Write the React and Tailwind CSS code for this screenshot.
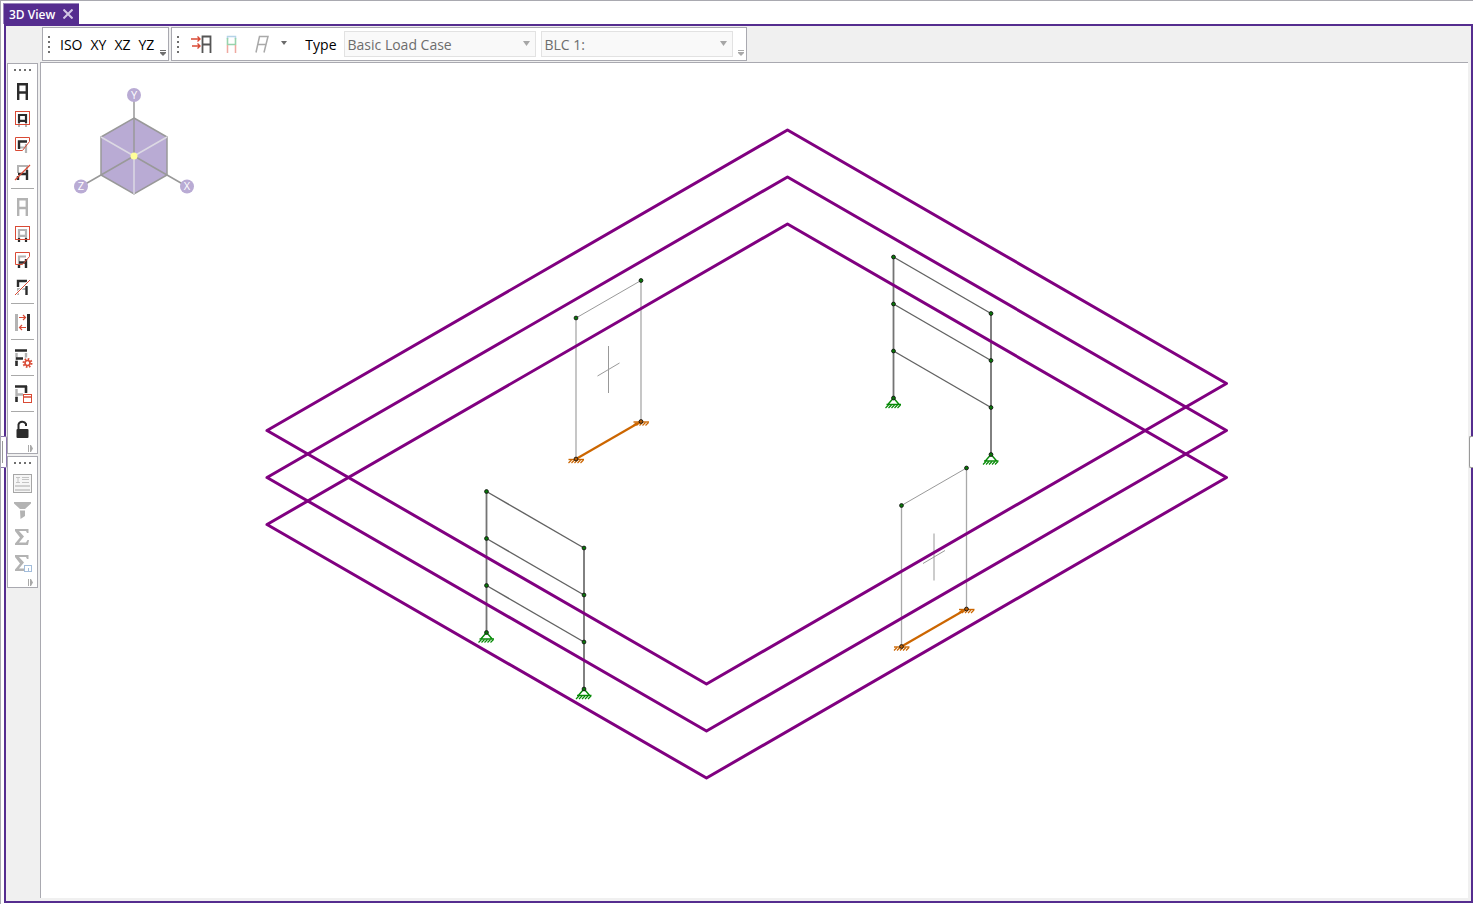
import React from "react";

const DARK = "#2b2b2b";
const PALE = "#b3b3b3";
const RED = "#d94a35";

function Grip({ vertical }) {
  return (
    <span
      className={
        vertical
          ? "flex h-[17px] w-0.5 flex-col justify-between"
          : "flex h-0.5 w-[17px] justify-between"
      }
    >
      <i className="size-0.5 bg-[#6f6f6f]" />
      <i className="size-0.5 bg-[#6f6f6f]" />
      <i className="size-0.5 bg-[#6f6f6f]" />
      <i className="size-0.5 bg-[#6f6f6f]" />
    </span>
  );
}

function Overflow({ color = "#6f6f6f" }) {
  return (
    <svg width="6" height="6" viewBox="0 0 6 6" fill={color} className="shrink-0">
      <rect width="6" height="1" />
      <path d="M0 2H6V3L3 6L0 3Z" />
    </svg>
  );
}

function SideOverflow() {
  return (
    <svg width="5" height="7" viewBox="0 0 5 7" fill="#a9a9a9">
      <rect width="1" height="7" />
      <path d="M2 0H3L5 3.5L3 7H2Z" />
    </svg>
  );
}

function ToolButton({ label, children }) {
  return (
    <button type="button" aria-label={label} title={label} className="block h-[27px] w-full">
      <svg viewBox="0 0 29 27" width="29" height="27" fill="none">
        {children}
      </svg>
    </button>
  );
}

function GroupLine() {
  return (
    <div className="mb-0.5 flex h-[5px] items-center px-[3px]">
      <div className="h-px w-full bg-[#a9a9a9]" />
    </div>
  );
}

function ItemLine() {
  return (
    <div className="flex h-[9px] items-center px-[3px]">
      <div className="h-px w-full bg-[#a9a9a9]" />
    </div>
  );
}

function SideTools() {
  return (
    <div className="flex w-[31px] flex-col border border-[#a9a9b0] bg-white">
      <div className="flex h-3.5 items-center justify-center pb-0.5">
        <Grip />
      </div>
      <ToolButton label="Select all">
        <path d="M10.2 22V6.2H18.8V22M10 14.5H19" stroke={DARK} strokeWidth="2.4" />
      </ToolButton>
      <ToolButton label="Box select">
        <path d="M11 17V22M18 17V22" stroke={PALE} strokeWidth="2" />
        <path d="M11 18V10H18V18M11 15.8H18" stroke={DARK} strokeWidth="2.2" />
        <rect x="7.5" y="6.5" width="14" height="13" stroke={RED} />
      </ToolButton>
      <ToolButton label="Polygon select">
        <path d="M18 12V21M12 15.5H18" stroke={PALE} strokeWidth="2.2" />
        <path d="M11 17V9.5H19" stroke={DARK} strokeWidth="2.4" />
        <path d="M7.5 5.5H21.5V9.5L14.5 18.5H7.5Z" stroke={RED} />
      </ToolButton>
      <ToolButton label="Line select">
        <path d="M10 14V7H19V12" stroke={PALE} strokeWidth="2" />
        <path d="M10 21V17M10 15H19M19 21V11" stroke={DARK} strokeWidth="2.4" />
        <path d="M7 21L22 6" stroke={RED} strokeWidth="1.2" />
      </ToolButton>
      <GroupLine />
      <ToolButton label="Unselect all">
        <path d="M10.2 23V6.2H18.8V23M10 15H19" stroke={PALE} strokeWidth="2.4" />
      </ToolButton>
      <ToolButton label="Box unselect">
        <path d="M11 18V22M18 18V22" stroke={DARK} strokeWidth="2.2" />
        <path d="M11 18V10H18V18M11 15.8H18" stroke={PALE} strokeWidth="2.2" />
        <rect x="7.5" y="6.5" width="14" height="13" stroke={RED} />
      </ToolButton>
      <ToolButton label="Polygon unselect">
        <path d="M11 17V9.5H18" stroke={PALE} strokeWidth="2.2" />
        <path d="M11 21V17M11 15.5H18M18 21V12" stroke={DARK} strokeWidth="2.4" />
        <path d="M7.5 5.5H21.5V9.5L14.5 17.5H7.5Z" stroke={RED} />
      </ToolButton>
      <ToolButton label="Line unselect">
        <path d="M10 21V15H18" stroke={PALE} strokeWidth="2" />
        <path d="M10 13V7H19M18.5 12V21" stroke={DARK} strokeWidth="2.4" />
        <path d="M7 21L22 6" stroke="#fff" strokeWidth="2.2" />
        <path d="M7 21L22 6" stroke={RED} strokeWidth="1" />
      </ToolButton>
      <GroupLine />
      <ToolButton label="Invert selection">
        <path d="M8.5 6V23" stroke={PALE} strokeWidth="3" />
        <path d="M20.5 6V23" stroke={DARK} strokeWidth="3" />
        <path
          d="M11 9.5H17M15 7L17.500 9.500L15 12M18 19.500H12M14 17L11.500 19.500L14 22"
          stroke={RED}
          strokeWidth="1.2"
        />
      </ToolButton>
      <ItemLine />
      <ToolButton label="Selection settings">
        <path d="M8.5 9V18M18 9V15" stroke={PALE} strokeWidth="2.4" />
        <path d="M7 6.5H19M8.500 17V22M8 14.500H15" stroke={DARK} strokeWidth="2.6" />
        <circle cx="19.500" cy="19" r="4.200" stroke="#fff" strokeWidth="3" />
        <circle cx="19.500" cy="19" r="4" stroke={RED} strokeWidth="2" strokeDasharray="1.6 1.5" />
        <circle cx="19.500" cy="19" r="2.500" stroke={RED} strokeWidth="1.6" />
      </ToolButton>
      <ItemLine />
      <ToolButton label="Saved selections">
        <path d="M8.5 9V18M8 14.500H15" stroke={PALE} strokeWidth="2.4" />
        <path d="M7 6.500H19M18 6V13M8.500 17V22" stroke={DARK} strokeWidth="2.6" />
        <rect x="15.500" y="14.500" width="8" height="8" fill="#fff" stroke={RED} />
        <path d="M15 17H24" stroke={RED} strokeWidth="1.5" />
      </ToolButton>
      <ItemLine />
      <ToolButton label="Unlock">
        <rect x="8.5" y="13" width="12" height="9" rx="1" fill={DARK} />
        <path d="M10.5 13V8.5A4 3.8 0 0 1 18 8V10" stroke={DARK} strokeWidth="2" />
      </ToolButton>
      <div className="flex h-2.5 items-center justify-end pr-1">
        <SideOverflow />
      </div>
    </div>
  );
}

function ResultTools() {
  return (
    <div className="flex w-[31px] flex-col border border-[#a9a9b0] bg-white">
      <div className="flex h-3.5 items-center justify-center pb-0.5">
        <Grip />
      </div>
      <ToolButton label="Member details">
        <rect x="5.5" y="3.5" width="18" height="18" fill="#f6f6f6" stroke="#a6a6a6" />
        <path d="M8 6.5H12M10 6V12M8 11.5H12M14 6.5H21M14 8.5H21M14 11.5H21" stroke="#c4c4c4" />
        <path d="M7 15H22M7 19H22" stroke="#c4c4c4" strokeWidth="1.5" />
      </ToolButton>
      <ToolButton label="Filter">
        <path d="M6 4H23V5.5L17 11H12L6 5.5ZM12 12.5H17V18L12.5 21Z" fill={PALE} />
      </ToolButton>
      <ToolButton label="Sum">
        <path d="M7 4H20.5V8H19L18 6H11L16 11.5L11 17.5H18L19.5 15H21L20 20H7V18.5L12 12.5L7 6Z" fill={PALE} />
      </ToolButton>
      <ToolButton label="Sum of selected">
        <path d="M7 3H20.5V7H19L18 5H11L16 10.5L11 16.5H18L19.5 14H21L20 19H7V17.5L12 11.5L7 5Z" fill={PALE} />
        <rect x="16.5" y="13.5" width="7" height="6" fill="#fff" stroke="#a3bddb" />
        <path d="M20.5 16V19" stroke="#a3bddb" />
      </ToolButton>
      <div className="flex h-2 items-start justify-end pr-1">
        <SideOverflow />
      </div>
    </div>
  );
}

function Combo({ label, value }) {
  return (
    <div className="relative w-48">
      <select
        disabled
        aria-label={label}
        defaultValue={value}
        className="block h-[26px] w-full appearance-none border border-[#e2e2e2] bg-[#f9f9f9] pt-px pl-[3px] text-sm leading-5 text-[#6d6d6d] opacity-100"
      >
        <option>{value}</option>
      </select>
      <svg width="7" height="5" viewBox="0 0 7 5" className="absolute top-2.5 right-1.5">
        <path d="M0 0H7L3.5 5Z" fill="#a6a6a6" />
      </svg>
    </div>
  );
}

function TopTools() {
  return (
    <div className="flex items-start gap-0.5 pt-px pl-0.5">
      <div className="flex h-[34px] items-center border border-[#a9a9b0] bg-white pl-[5px] text-sm leading-5 text-black">
        <Grip vertical />
        <div className="ml-2.5 flex gap-2 pt-0.5">
          <button type="button">ISO</button>
          <button type="button">XY</button>
          <button type="button">XZ</button>
          <button type="button">YZ</button>
        </div>
        <div className="ml-1.5 self-end pr-0.5 pb-1">
          <Overflow />
        </div>
      </div>
      <div className="flex h-[34px] items-center border border-[#a9a9b0] bg-white pl-[5px] text-sm leading-5 text-black">
        <Grip vertical />
        <button type="button" aria-label="Render loads" className="ml-3">
          <svg width="21" height="18" viewBox="0 0 21 18" fill="none">
            <path d="M11.5 18V1.5H19.5V18M11.5 9.5H19.5" stroke="#555" strokeWidth="1.8" />
            <path d="M0 4H9M6.5 1.500L9 4L6.5 6.500M1 11H9M6.5 8.500L9 11L6.5 13.500" stroke={RED} strokeWidth="1.4" />
          </svg>
        </button>
        <button type="button" aria-label="Color model" className="ml-3.5">
          <svg width="11" height="18" viewBox="0 0 11 18" fill="none">
            <path d="M1.5 4V1.5H9.5V4" stroke="#b5d3e8" strokeWidth="1.5" />
            <path d="M1.5 3V9.5H9.5V3" stroke="#98d3ac" strokeWidth="1.6" />
            <path d="M1.5 10V18M9.5 10V18" stroke="#efa9a0" strokeWidth="1.5" />
          </svg>
        </button>
        <button type="button" aria-label="Deflected shape" className="ml-[18px]">
          <svg width="14" height="18" viewBox="0 0 14 18" fill="none">
            <path d="M1 17.5L4.5 1.5H13L9 17.5M3 9.5H11" stroke="#a9a9a9" strokeWidth="1.5" />
          </svg>
        </button>
        <button type="button" aria-label="More shapes" className="ml-3">
          <svg width="6" height="4" viewBox="0 0 6 4" className="mb-0.5 block">
            <path d="M0 0H6L3 4Z" fill="#6a6a6a" />
          </svg>
        </button>
        <span className="ml-[18px] pt-0.5">Type</span>
        <div className="ml-[7px] flex gap-[5px]">
          <Combo label="Load type" value="Basic Load Case" />
          <Combo label="Load case" value="BLC 1:" />
        </div>
        <div className="ml-[5px] self-end pr-0.5 pb-1">
          <Overflow color="#a9a9a9" />
        </div>
      </div>
    </div>
  );
}

const slabs = [0, 47, 94];
const frames = [
  [893.5, 257],
  [486.5, 491.5],
];
const walls = [
  [576, 318],
  [901.5, 505.5],
];

function Node({ x, y, base }) {
  return <circle cx={x} cy={y} r="1.9" fill={base ? "#b85c00" : "#087808"} stroke="#151515" strokeWidth="0.9" />;
}

function Pinned({ x, y }) {
  return (
    <g transform={`translate(${x} ${y})`} stroke="#078a07" fill="none">
      <path d="M0 0L-5.5 6.2M0 0L5.5 6.2M-7 6.5H7.5" strokeWidth="1.4" />
      <path d="M-5 7L-8 10M-2 7L-5 10M1 7L-2 10M4 7L1 10M7 7L4 10" strokeWidth="1.2" />
    </g>
  );
}

function Fixed({ x, y }) {
  return (
    <g transform={`translate(${x} ${y})`} stroke="#cc6600" fill="none">
      <path d="M-7.5 0.5H8" strokeWidth="1.4" />
      <path d="M-4.5 1L-7.5 4M-1.5 1L-4.5 4M1.5 1L-1.5 4M4.5 1L1.5 4M7.5 1L4.5 4" strokeWidth="1.2" />
    </g>
  );
}

function Model() {
  return (
    <svg
      viewBox="41 63 1427 835"
      className="block size-full"
      fill="none"
      role="img"
      aria-label="Isometric structural model"
    >
      {frames.map(([x, y]) => (
        <g key={x} stroke="#626262" strokeWidth="1.4">
          <path d={`M${x} ${y}V${y + 141}M${x + 97.5} ${y + 56.5}V${y + 197.5}`} stroke="#747474" strokeWidth="1.8" />
          {slabs.map((d) => (
            <path key={d} d={`M${x} ${y + d}l97.5 56.5`} />
          ))}
        </g>
      ))}
      {walls.map(([x, y]) => (
        <g key={x} stroke="#999" strokeWidth="1">
          <path d={`M${x} ${y}V${y + 141}M${x + 65} ${y - 37.5}V${y + 103.5}`} stroke="#a9a9a9" strokeWidth="1.3" />
          <path d={`M${x} ${y}l65 -37.5`} />
          <path d={`M${x + 32.5} ${y + 28}v47M${x + 21.5} ${y + 58}l22 -13`} />
        </g>
      ))}
      {slabs.map((d) => (
        <path
          key={d}
          d={`M787.5 ${130 + d}L1226.5 ${383.5 + d}L706.5 ${684 + d}L267 ${430.5 + d}Z`}
          stroke="#800080"
          strokeWidth="3"
          strokeLinejoin="round"
        />
      ))}
      {walls.map(([x, y]) => (
        <g key={x}>
          <path d={`M${x} ${y + 141}l65 -37.5`} stroke="#cc6600" strokeWidth="2.2" />
          <Fixed x={x} y={y + 141} />
          <Fixed x={x + 65} y={y + 103.5} />
          <Node x={x} y={y} />
          <Node x={x + 65} y={y - 37.5} />
          <Node x={x} y={y + 141} base />
          <Node x={x + 65} y={y + 103.5} base />
        </g>
      ))}
      {frames.map(([x, y]) => (
        <g key={x}>
          <Pinned x={x} y={y + 141} />
          <Pinned x={x + 97.5} y={y + 197.5} />
          {[0, 47, 94, 141].map((d) => (
            <React.Fragment key={d}>
              <Node x={x} y={y + d} />
              <Node x={x + 97.5} y={y + 56.5 + d} />
            </React.Fragment>
          ))}
        </g>
      ))}
    </svg>
  );
}

function ViewCube() {
  return (
    <svg
      width="120"
      height="110"
      viewBox="0 0 120 110"
      className="absolute top-[22px] left-[33px]"
      role="img"
      aria-label="View orientation"
    >
      <path d="M60 33L93 52V90L60 109L27 90V52Z" fill="#b9abd4" />
      <path d="M60 10V71M60 71L7 101.5M60 71L113 101.5" stroke="#999" strokeWidth="1.5" />
      <path d="M60 33L93 52V90L60 109L27 90V52Z" fill="none" stroke="#999" strokeWidth="1.5" />
      <path d="M60 71L27 52M60 71L93 52M60 71V109" stroke="#dcd9e3" strokeWidth="1.5" />
      <circle cx="60" cy="71" r="3.5" fill="#ffff99" />
      <g fill="#b9abd4">
        <circle cx="60" cy="10" r="7" />
        <circle cx="7" cy="101.5" r="7" />
        <circle cx="113" cy="101.5" r="7" />
      </g>
      <g fill="#fff" fontSize="11" textAnchor="middle">
        <text x="60" y="14">Y</text>
        <text x="7" y="105">Z</text>
        <text x="113" y="105">X</text>
      </g>
    </svg>
  );
}

export default function App() {
  return (
    <div className="relative flex h-screen flex-col overflow-hidden border-t border-l border-[#a9a9b0] bg-white pb-px font-['Open_Sans','Noto_Sans',sans-serif]">
      <div className="flex pt-0.5 pl-0.5">
        <div className="flex h-[21px] items-center gap-2 border-t border-l border-[#9b87bd] bg-[#552d8f] pr-1.5 pl-[5px] text-white">
          <span className="pt-px text-xs leading-4 font-semibold">3D View</span>
          <button type="button" aria-label="Close 3D View">
            <svg width="10" height="10" viewBox="0 0 10 10" className="block">
              <path d="M0.5 0.5L9.5 9.5M9.5 0.5L0.5 9.5" stroke="#d2c6e4" strokeWidth="2" />
            </svg>
          </button>
        </div>
      </div>
      <main className="ml-[3px] flex min-h-0 flex-1 border-2 border-[#552d8f] bg-[#f0f0f0]">
        <aside className="flex w-[34px] shrink-0 flex-col gap-0.5 pt-[37px] pl-px">
          <SideTools />
          <ResultTools />
        </aside>
        <section className="flex min-w-0 flex-1 flex-col pr-[3px] pb-[3px]">
          <div className="h-9">
            <TopTools />
          </div>
          <div className="relative min-h-0 flex-1 border-t border-l border-[#a9a9b0] bg-white">
            <Model />
            <ViewCube />
          </div>
        </section>
      </main>
      <button
        type="button"
        aria-label="Expand left panel"
        className="absolute top-[435px] -left-px flex h-8 w-[7px] items-center rounded-r-xs border border-l-0 border-[#8c78ae] bg-white pl-0.5"
      >
        <i className="h-[22px] w-px bg-[#999]" />
      </button>
      <button
        type="button"
        aria-label="Expand right panel"
        className="absolute top-[435px] right-0 h-8 w-1 rounded-l-xs border border-r-0 border-[#999] bg-white"
      />
    </div>
  );
}
